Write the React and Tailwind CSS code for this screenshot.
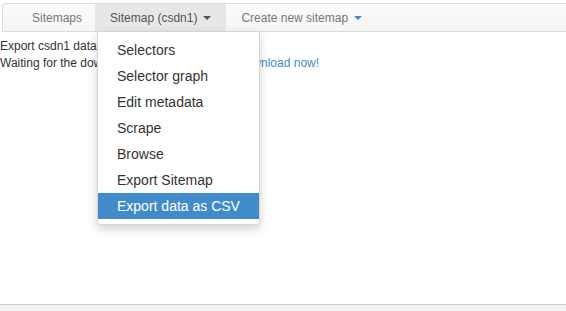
export default function App() {
  const items = ["Selectors", "Selector graph", "Edit metadata", "Scrape", "Browse", "Export Sitemap"];
  return (
    <div className="relative h-[311px] w-[566px] overflow-hidden bg-white flex flex-col" style={{ fontFamily: '"Liberation Sans", Arial, sans-serif' }}>
      <div className="pt-[3px] pl-[2px]">
        <div className="h-[29px] flex items-stretch border border-r-0 border-[#dcdcdc] rounded-tl-[4px] bg-gradient-to-b from-[#fbfbfb] to-[#f5f5f5] text-[12px] text-[#777]">
          <div className="flex items-center pl-[29px] pr-[13px]">Sitemaps</div>
          <div className="relative flex items-center px-[15px] bg-[#e7e7e7] text-[#555]">
            <span>Sitemap (csdn1)</span>
            <span className="ml-[6px] inline-block w-0 h-0 border-l-[4px] border-r-[4px] border-t-[4px] border-l-transparent border-r-transparent border-t-[#555]"></span>
          </div>
          <div className="flex items-center px-[15px]">
            <span>Create new sitemap</span>
            <span className="ml-[6px] inline-block w-0 h-0 border-l-[4px] border-r-[4px] border-t-[4px] border-l-transparent border-r-transparent border-t-[#428bca]"></span>
          </div>
        </div>
      </div>
      <div className="flex-1 pt-[6px] text-[12px] leading-[17px] text-[#333]">
        <div>Export csdn1 data</div>
        <div>
          Waiting for the download to finish or to start.{" "}
          <span className="text-[#428bca]">Download now!</span>
        </div>
      </div>
      <div className="h-[7px] border-t border-[#cfcfcf] bg-[#f2f2f2]"></div>

      <div className="absolute left-[97px] top-[31px] w-[163px] py-[5px] bg-white border border-[#d5d5d5] rounded-b-[3px] shadow-[0_4px_10px_rgba(0,0,0,0.18)] text-[14px] text-[#333]">
        {items.map((t) => (
          <div key={t} className="h-[26px] flex items-center pl-[19px]">{t}</div>
        ))}
        <div className="h-[26px] flex items-center pl-[19px] bg-[#428bca] text-white">Export data as CSV</div>
      </div>
    </div>
  );
}
